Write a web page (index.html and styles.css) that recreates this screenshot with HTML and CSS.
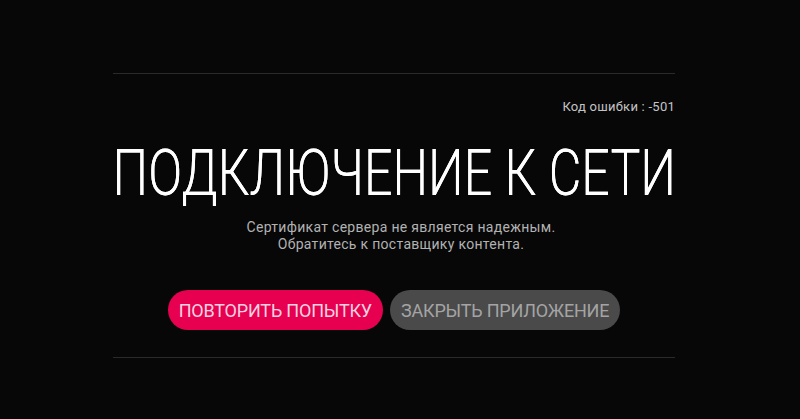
FILE: index.html
```html
<!DOCTYPE html>
<html lang="ru">
<head>
<meta charset="utf-8">
<link rel="stylesheet" href="styles.css">
</head>
<body>
<div class="panel">
  <div class="rule"></div>
  <div class="code">Код ошибки : -501</div>
  <h1 class="title"><span class="title-text">ПОДКЛЮЧЕНИЕ К СЕТИ</span></h1>
  <p class="msg">Сертификат сервера не является надежным.<br>Обратитесь к поставщику контента.</p>
  <div class="buttons">
    <button class="btn btn-primary">ПОВТОРИТЬ ПОПЫТКУ</button>
    <button class="btn btn-secondary">ЗАКРЫТЬ ПРИЛОЖЕНИЕ</button>
  </div>
  <div class="rule rule-bottom"></div>
</div>
</body>
</html>
```

FILE: styles.css
```css
html, body {
  margin: 0;
  padding: 0;
  background: #070708;
  height: 100%;
  overflow: hidden;
}
body {
  font-family: "Roboto", "Noto Sans", sans-serif;
  color: #fff;
}
.panel {
  width: 562px;
  margin-left: 113px;
  padding-top: 73px;
  display: flex;
  flex-direction: column;
}
.rule {
  height: 1px;
  background: #2a2a2c;
}
.code {
  margin-top: 25px;
  text-align: right;
  font-size: 13px;
  line-height: 16px;
  letter-spacing: 0.25px;
  color: #c4c4c4;
}
.title {
  margin: 27px 0 0;
  display: flex;
  justify-content: center;
  font-weight: 300;
  font-size: 64px;
  line-height: 64px;
  white-space: nowrap;
}
.title-text {
  flex: none;
  display: block;
  transform: scaleX(0.784);
  transform-origin: center;
  text-shadow: 0 0 0.4px #fff;
}
.msg {
  margin: 13px 0 0;
  padding-left: 14px;
  text-align: center;
  font-size: 14px;
  line-height: 17px;
  letter-spacing: 0.3px;
  color: #b2b2b2;
}
.buttons {
  margin-top: 37px;
  display: flex;
  justify-content: center;
  gap: 7px;
}
.btn {
  height: 40px;
  border: none;
  border-radius: 20px;
  padding: 0 11px;
  font-family: inherit;
  font-size: 18px;
  letter-spacing: -0.2px;
}
.btn-primary {
  background: #e80050;
  color: #f7d3e0;
}
.btn-secondary {
  background: #4a4a4a;
  color: #a4a4a4;
}
.rule-bottom {
  margin-top: 27px;
}
```
